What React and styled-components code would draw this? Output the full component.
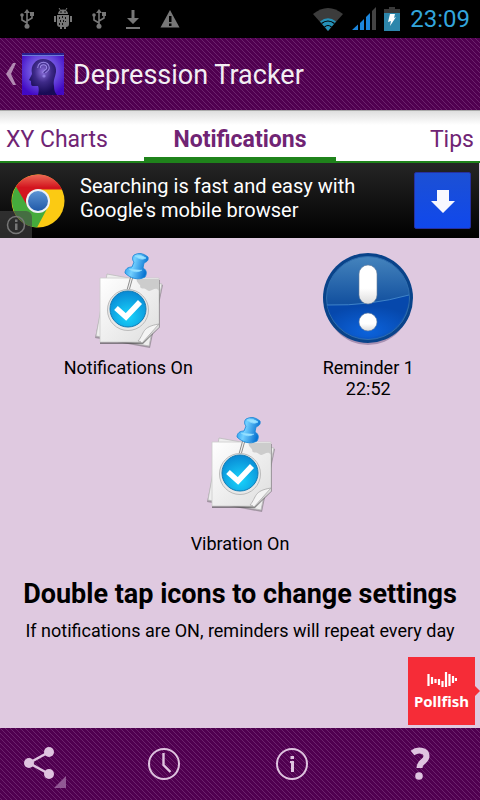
import React from "react";
import styled, { createGlobalStyle, css } from "styled-components";

const GlobalStyle = createGlobalStyle`
  * {
    box-sizing: border-box;
  }
  body {
    margin: 0;
    background: #dfc9e0;
    font-family: Roboto, "Liberation Sans", sans-serif;
  }
  button {
    padding: 0;
    border: none;
    background: none;
    font-family: inherit;
    cursor: pointer;
  }
  svg {
    display: block;
  }
  h1, h2, p {
    margin: 0;
  }
`;

const stripes = css`
  background-color: #500050;
  background-image: linear-gradient(45deg, #6c236d 10%, transparent 10%, transparent 42%, #6c236d 42%, #6c236d 60%, transparent 60%, transparent 92%, #6c236d 92%);
  background-size: 5px 5px;
`;

function UsbIcon() {
  return (
    <svg width="14" height="20" viewBox="0 0 14 20" fill="none" stroke="#777" strokeWidth="1.6">
      <path d="M7 3v14M7 14L2 11V6M7 12l5-3V5" />
      <path d="M7 0l3 4H4z" fill="#777" stroke="none" />
      <circle cx="2" cy="6" r="1.8" fill="#777" stroke="none" />
      <path d="M10 3h4v4h-4z" fill="#777" stroke="none" />
      <circle cx="7" cy="17.3" r="2.5" fill="#777" stroke="none" />
    </svg>
  );
}

function DroidIcon() {
  return (
    <svg width="20" height="22" viewBox="0 0 20 22" fill="#777">
      <path d="M5 6a5 4.500 0 0 1 10 0z" />
      <path d="M6 0l2 3M14 0l-2 3" stroke="#777" />
      <path d="M4 7h12v9a3 3 0 0 1-3 3v2h-2v-2H9v2H7v-2a3 3 0 0 1-3-3z" />
      <path d="M1 8h2v6H1zM17 8h2v6h-2z" />
      <circle cx="8" cy="4" r=".8" fill="#000" />
      <circle cx="12" cy="4" r=".8" fill="#000" />
      <path d="M6 9h1v2H6zM9 8h1v2H9zM12 9h1v2h-1zM7 12h1v2H7zM10 12h1v2h-1zM6 15h1v2H6zM9 15h1v2H9zM12 13h1v1h-1z" fill="#111" />
    </svg>
  );
}

function DownloadIcon() {
  return (
    <svg width="16" height="21" viewBox="0 0 16 21" fill="#777">
      <path d="M6.500 1h3v8H14l-6 6-6-6h4.500zM1 18h14v2H1z" />
    </svg>
  );
}

function WarningIcon() {
  return (
    <svg width="20" height="20" viewBox="0 0 20 20">
      <path d="M10 1L19.500 18.500H.5z" fill="#777" />
      <path d="M9 7h2.500v6H9zM9 14.500h2.500V17H9z" fill="#000" />
    </svg>
  );
}

function WifiIcon() {
  return (
    <svg width="32" height="24" viewBox="0 0 32 24">
      <path d="M16 24L1 7Q16-5 31 7z" fill="#3c3c3c" />
      <path d="M16 24L8 14.500Q16 8 24 14.500z" fill="#2591b8" />
      <path d="M9.500 16.500q6.500-5 13 0M12.500 20q3.500-3 7 0" stroke="#000" strokeWidth="1.200" fill="none" />
    </svg>
  );
}

function SignalIcon() {
  return (
    <svg width="24" height="24" viewBox="0 0 24 24" fill="#1c86dc">
      <path d="M0 23l6-5.500V23zM8 16l4-4v11H8zM14 10l4-4v17h-4z" />
      <path d="M20 4l4-4v23h-4z" fill="#444" />
    </svg>
  );
}

function BatteryIcon() {
  return (
    <svg width="16" height="24" viewBox="0 0 16 24">
      <path d="M5 0h6v2h5v22H0V2h5z" fill="#2d86ab" />
      <path d="M5 0h6v2h5v4H0V2h5z" fill="#3a3a3a" />
      <path d="M6 7h5l-1 4 2-1-6 9 1-5-3 1z" fill="#fff" />
    </svg>
  );
}

function HeadIcon() {
  return (
    <svg width="42" height="42" viewBox="0 0 42 42">
      <defs>
        <radialGradient id="glow" cx=".5" cy=".42" r=".62">
          <stop offset="0" stopColor="#a58cf0" />
          <stop offset=".6" stopColor="#6644dc" />
          <stop offset="1" stopColor="#4209c4" />
        </radialGradient>
        <radialGradient id="brain" cx=".5" cy=".35" r=".6">
          <stop offset="0" stopColor="#8a6edb" />
          <stop offset=".5" stopColor="#3e2a88" />
          <stop offset="1" stopColor="#180b56" />
        </radialGradient>
      </defs>
      <path d="M0 0h42v42H0z" fill="url(#glow)" />
      <path d="M0 0h42v2H0z" fill="#29208f" />
      <path d="M0 2h42v1H0z" fill="#6d7bd8" />
      <path d="M16 42c1-4 1-7 0-9h-5c-2 0-2-2-2-5l-2-1 3-6C8 12 14 6 21 6c8 0 14 6 13 13-1 6-3 8-2 14 0 4 1 7 3 9z" fill="url(#brain)" />
      <path d="M17 15c0-6 9-6 9 0 0 3-4 3-4 5" fill="none" stroke="#9d8be8" strokeWidth="3.600" />
      <path d="M17 15c0-6 9-6 9 0 0 3-4 3-4 5" fill="none" stroke="#4b3796" strokeWidth="1.600" />
      <circle cx="22" cy="23" r="1.600" fill="#8f7de0" />
    </svg>
  );
}

function ChromeIcon() {
  return (
    <svg width="54" height="54" viewBox="0 0 54 54">
      <defs>
        <linearGradient id="red" x2="0" y2="1">
          <stop offset="0" stopColor="#ec6a55" />
          <stop offset=".4" stopColor="#d3151f" />
        </linearGradient>
        <linearGradient id="blue" x2="0" y2="1">
          <stop offset="0" stopColor="#5c94d4" />
          <stop offset="1" stopColor="#2059a8" />
        </linearGradient>
      </defs>
      <circle cx="27" cy="27" r="26.500" fill="#fbca13" />
      <path d="M27 27L5 13A26.500 26.500 0 0 0 26 53.500L37 33z" fill="#45ab3c" />
      <path d="M27 15.500H51A26.500 26.500 0 0 0 5 12.500L17 33z" fill="url(#red)" />
      <circle cx="27" cy="27" r="12" fill="#edf1f6" />
      <circle cx="27" cy="27" r="10" fill="url(#blue)" />
    </svg>
  );
}

function NoteIcon() {
  return (
    <svg width="96" height="96" viewBox="0 0 96 96">
      <defs>
        <linearGradient id="paper" x2="1" y2="1">
          <stop offset="0" stopColor="#fff" />
          <stop offset="1" stopColor="#dedede" />
        </linearGradient>
        <radialGradient id="cyan" cx=".5" cy=".7" r=".7">
          <stop offset="0" stopColor="#19d5fc" />
          <stop offset="1" stopColor="#0888d4" />
        </radialGradient>
        <linearGradient id="pin" x2="1" y2=".3">
          <stop offset="0" stopColor="#128be6" />
          <stop offset=".45" stopColor="#73d0ff" />
          <stop offset="1" stopColor="#0874d2" />
        </linearGradient>
      </defs>
      <path d="M28 24l55 9-13 63-55-10z" fill="#555" opacity=".45" />
      <path d="M27 22l55 10-13 62-53-10z" fill="#eee" stroke="#bbb" strokeWidth=".8" />
      <path d="M20 28h60v47L63 92H20z" fill="#444" opacity=".6" />
      <path d="M20 26h59v49L63 90H20z" fill="url(#paper)" stroke="#ccc" strokeWidth=".8" />
      <path d="M57 27h22v12c-4-6-8 3-12-1-3-3-5 0-7-3 2-2-5-5-3-8z" fill="#ccc" />
      <path d="M79 72L62 91q-1-2-4-2c7-8 3-14 21-17z" fill="#f4f4f4" stroke="#aaa" strokeWidth=".8" />
      <path d="M52 24l-5 18" stroke="#888" strokeWidth="3" />
      <path d="M52 24l-5 18" stroke="#eee" strokeWidth="1.200" />
      <circle cx="48" cy="58" r="20.500" fill="#e8e8e8" stroke="#bbb" />
      <circle cx="48" cy="57" r="18" fill="url(#cyan)" stroke="#147cb4" />
      <path d="M36 56l10 9 14-15" fill="none" stroke="#fff" strokeWidth="5.500" />
      <path d="M54 3q7-4 14 2c1 4-2 5-4 6l-1 5c4 2 4 6 2 9-7 4-15 1-20-4 0-4 3-6 7-6l2-5c-2-2-2-5 0-7z" fill="url(#pin)" stroke="#1584d6" strokeWidth=".8" />
      <path d="M55 4q6-2 11 2-5 3-11-2zM49 17q7 5 13 1" fill="#9be2ff" stroke="#8bdcff" strokeWidth=".8" />
    </svg>
  );
}

function AlertIcon() {
  return (
    <svg width="96" height="96" viewBox="0 0 96 96">
      <defs>
        <linearGradient id="ball" x2="0" y2="1">
          <stop offset="0" stopColor="#4584bd" />
          <stop offset=".55" stopColor="#1452a0" />
          <stop offset="1" stopColor="#0b58c8" />
        </linearGradient>
        <radialGradient id="shine" cx=".5" cy=".85" r=".6">
          <stop offset="0" stopColor="#0c63dc" />
          <stop offset="1" stopColor="#0648ac" />
        </radialGradient>
        <linearGradient id="mark" x2="0" y2="1">
          <stop offset=".6" stopColor="#fff" />
          <stop offset="1" stopColor="#dcdcdc" />
        </linearGradient>
      </defs>
      <ellipse cx="48" cy="49" rx="43" ry="44" fill="#846c95" opacity=".6" />
      <circle cx="48" cy="46" r="45" fill="#09438a" />
      <circle cx="48" cy="46" r="41.500" fill="url(#ball)" stroke="#2f6dae" strokeWidth="1" />
      <path d="M7 53q43 1 82-10A41.500 41.500 0 0 1 7 53z" fill="url(#shine)" />
      <path d="M7 53q43 1 82-10" fill="none" stroke="#3f83c8" strokeWidth="1" />
      <rect x="39" y="13" width="18" height="39" rx="9" fill="url(#mark)" stroke="#667e9c" strokeWidth=".6" />
      <circle cx="48" cy="70" r="9" fill="url(#mark)" stroke="#667e9c" strokeWidth=".6" />
    </svg>
  );
}

function ShareIcon() {
  return (
    <svg width="48" height="48" viewBox="0 0 48 48" fill="#dfc4e0">
      <path d="M37 12L17 23l20 11" fill="none" stroke="#dfc4e0" strokeWidth="2.500" />
      <circle cx="37" cy="12" r="5" />
      <circle cx="17" cy="23" r="5" />
      <circle cx="37" cy="34" r="5" />
    </svg>
  );
}

function ClockIcon() {
  return (
    <svg width="48" height="48" viewBox="0 0 48 48" fill="none" stroke="#dfc4e0">
      <circle cx="24" cy="24" r="15" strokeWidth="2" />
      <path d="M23.500 13v12l7 7" strokeWidth="2.400" />
    </svg>
  );
}

function InfoIcon() {
  return (
    <svg width="48" height="48" viewBox="0 0 48 48" fill="#dfc4e0">
      <circle cx="24" cy="24" r="15" fill="none" stroke="#dfc4e0" strokeWidth="2" />
      <path d="M22.500 16h3.500v3h-3.500zM22 21h4v11h-3V23h-1z" />
    </svg>
  );
}

function HelpIcon() {
  return (
    <svg width="48" height="48" viewBox="0 0 48 48">
      <path d="M16.500 13c5-4 14-3 14 3 0 6-7 5-7 12" fill="none" stroke="#dfc4e0" strokeWidth="6" />
      <circle cx="23" cy="36" r="3.800" fill="#dfc4e0" />
    </svg>
  );
}

function Setting({ icon, label, gap }) {
  return (
    <SettingButton $gap={gap}>
      {icon}
      <span>{label}</span>
    </SettingButton>
  );
}

function App() {
  return (
    <Screen>
      <GlobalStyle />
      <StatusBar>
        <StatusGroup $gap="19px">
          <UsbIcon />
          <DroidIcon />
          <UsbIcon />
          <DownloadIcon />
          <WarningIcon />
        </StatusGroup>
        <StatusGroup $gap="8px">
          <WifiIcon />
          <SignalIcon />
          <BatteryIcon />
          <Time>23:09</Time>
        </StatusGroup>
      </StatusBar>

      <Header>
        <BackButton aria-label="Back">
          <svg width="10" height="22" viewBox="0 0 10 22">
            <path d="M7 0h3L5 11l5 11H7L0 11z" fill="#b28ab3" />
          </svg>
          <HeadIcon />
        </BackButton>
        <Title>Depression Tracker</Title>
      </Header>

      <Tabs>
        <Tab $align="left">XY Charts</Tab>
        <Tab $active>Notifications</Tab>
        <Tab $align="right">Tips</Tab>
      </Tabs>

      <Ad>
        <ChromeIcon />
        <AdText>
          Searching is fast and easy with
          <br />
          Google's mobile browser
        </AdText>
        <Install aria-label="Install">
          <svg width="24" height="24" viewBox="0 0 24 24">
            <path d="M6 1h12v11h6L12 24 0 12h6z" fill="#f8f8ff" />
          </svg>
        </Install>
        <AdInfo aria-label="About this ad">
          <svg width="20" height="20" viewBox="0 0 20 20" fill="#777">
            <circle cx="10" cy="10" r="8.500" fill="none" stroke="#777" strokeWidth="1.500" />
            <path d="M9 4.500h2.500V7H9zM9 8.500h2.500V15H9z" />
          </svg>
        </AdInfo>
      </Ad>

      <Content>
        <Row>
          <Setting icon={<NoteIcon />} label="Notifications On" gap="9px" />
          <Setting
            icon={<AlertIcon />}
            label={<>Reminder 1<br />22:52</>}
            gap="9px"
          />
        </Row>
        <Row>
          <Setting icon={<NoteIcon />} label="Vibration On" gap="21px" />
        </Row>
        <Heading>Double tap icons to change settings</Heading>
        <Hint>If notifications are ON, reminders will repeat every day</Hint>
        <Pollfish href="#pollfish">
          <svg width="30" height="16" viewBox="0 0 30 16" stroke="#fff" strokeWidth="2.200">
            <path d="M1.500 2v12M5 5v7M8.500 7v4M12 7v6M15.500 9v6M19 0v15M22.500 2v12M26 4v7M29 6v3" />
          </svg>
          Pollfish
        </Pollfish>
      </Content>

      <Footer>
        <FooterButton aria-label="Share" $more><ShareIcon /></FooterButton>
        <FooterButton aria-label="History"><ClockIcon /></FooterButton>
        <FooterButton aria-label="Info"><InfoIcon /></FooterButton>
        <FooterButton aria-label="Help"><HelpIcon /></FooterButton>
      </Footer>
    </Screen>
  );
}

const Screen = styled.div`
  display: flex;
  flex-direction: column;
  min-height: 100vh;
`;

const StatusBar = styled.div`
  display: flex;
  justify-content: space-between;
  height: 38px;
  padding: 0 10px 0 20px;
  background: #000;
`;

const StatusGroup = styled.div`
  display: flex;
  align-items: center;
  gap: ${(props) => props.$gap};
`;

const Time = styled.span`
  margin-left: 2px;
  color: #33a5dc;
  font-size: 24px;
`;

const Header = styled.header`
  display: flex;
  align-items: center;
  gap: 9px;
  height: 72px;
  padding-left: 6px;
  ${stripes}
`;

const BackButton = styled.button`
  display: flex;
  align-items: center;
  gap: 6px;
`;

const Title = styled.h1`
  padding-top: 2px;
  color: #f3eef3;
  font-size: 27px;
  font-weight: 400;
`;

const Tabs = styled.nav`
  display: grid;
  grid-template-columns: 1fr auto 1fr;
  height: 53px;
  border-top: 1px solid #aaa;
  background: linear-gradient(#dedede, #fff 14px);
  box-shadow: inset 0 -2px #1f831b;
`;

const Tab = styled.button`
  padding: 6px 6px 0;
  border-bottom: 2px solid #1f831b;
  color: #702474;
  font-size: 23px;
  text-align: ${(props) => props.$align || "center"};

  ${(props) =>
    props.$active &&
    css`
      padding: 10px 30px 0;
      border-bottom-width: 6px;
      font-weight: 700;
    `}
`;

const Ad = styled.section`
  position: relative;
  display: flex;
  align-items: center;
  gap: 15px;
  height: 75px;
  margin-right: 1px;
  padding: 0 8px 0 11px;
  background: linear-gradient(#252525, #000);
`;

const AdText = styled.p`
  flex: 1;
  padding-bottom: 6px;
  color: #fff;
  font-size: 20px;
  line-height: 24px;
`;

const Install = styled.button`
  display: grid;
  place-items: center;
  width: 57px;
  height: 57px;
  border: 1px solid #2630a0;
  border-radius: 2px;
  background: linear-gradient(#1c50d4, #1048ec);
`;

const AdInfo = styled.button`
  position: absolute;
  left: 0;
  bottom: 0;
  display: grid;
  place-items: center;
  width: 32px;
  height: 27px;
  border-top-right-radius: 6px;
  background: rgba(70, 70, 70, 0.6);
`;

const Content = styled.main`
  position: relative;
  flex: 1;
  padding-top: 14px;
  background: #dfc9e0;
  text-align: center;
`;

const Row = styled.div`
  display: flex;
  justify-content: space-around;
  align-items: flex-start;
  margin-bottom: 17px;
`;

const SettingButton = styled.button`
  display: flex;
  flex-direction: column;
  align-items: center;
  gap: ${(props) => props.$gap};
  color: #000;
  font-size: 18px;
  line-height: 21px;
`;

const Heading = styled.h2`
  margin-top: 24px;
  font-size: 27px;
  line-height: 32px;
`;

const Hint = styled.p`
  margin-top: 10px;
  font-size: 18px;
  line-height: 22px;
`;

const Pollfish = styled.a`
  position: absolute;
  right: 5px;
  bottom: 3px;
  display: flex;
  flex-direction: column;
  align-items: center;
  gap: 4px;
  width: 67px;
  height: 68px;
  padding-top: 15px;
  background: #f62c37;
  color: #fff;
  font: 700 15px/18px "Noto Sans", sans-serif;
  text-decoration: none;

  &::after {
    content: "";
    position: absolute;
    top: 29px;
    left: 100%;
    border: solid transparent;
    border-width: 5px 0 5px 5px;
    border-left-color: #f62c37;
  }
`;

const Footer = styled.footer`
  display: flex;
  justify-content: space-between;
  align-items: center;
  height: 72px;
  padding: 0 36px 0 12px;
  ${stripes}
`;

const FooterButton = styled.button`
  position: relative;

  ${(props) =>
    props.$more &&
    css`
      &::after {
        content: "";
        position: absolute;
        right: -6px;
        bottom: 0;
        border: 6px solid #915894;
        border-top-color: transparent;
        border-left-color: transparent;
      }
    `}
`;

export default App;
